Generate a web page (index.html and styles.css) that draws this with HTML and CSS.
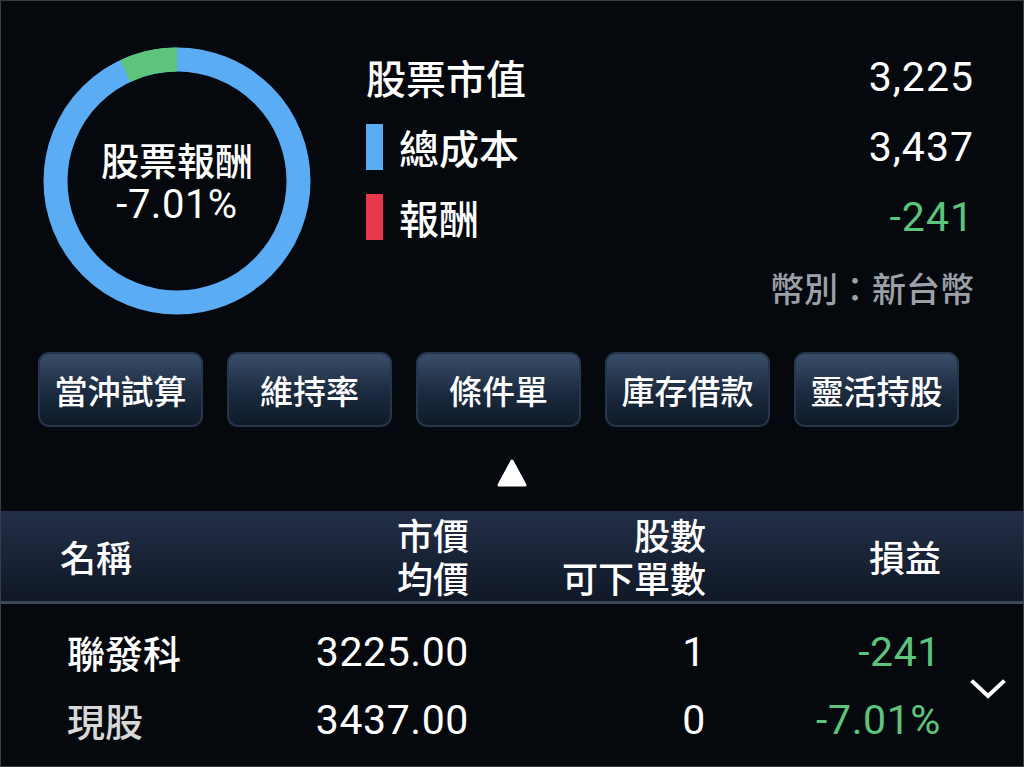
FILE: index.html
```html
<!DOCTYPE html>
<html lang="zh-Hant">
<head>
<meta charset="utf-8">
<title>股票報酬</title>
<link rel="stylesheet" href="styles.css">
</head>
<body>
<div class="screen">
  <section class="summary">
    <div class="donut">
      <svg class="ring" width="268" height="268" viewBox="0 0 268 268">
        <circle cx="134" cy="134" r="121.5" fill="none" stroke="#5aacf4" stroke-width="24"/>
        <circle cx="134" cy="134" r="121.5" fill="none" stroke="#5cc47b" stroke-width="24"
          stroke-dasharray="53.5 710" transform="rotate(-90 134 134) scale(1 -1) translate(0 -268)"/>
      </svg>
      <div class="donut-label">
        <div class="donut-title">股票報酬</div>
        <div class="donut-value">-7.01%</div>
      </div>
    </div>
    <div class="info">
      <div class="info-row">
        <span class="info-label">股票市值</span>
        <span class="info-num">3,225</span>
      </div>
      <div class="info-row">
        <span class="info-label"><i class="swatch swatch-blue"></i>總成本</span>
        <span class="info-num">3,437</span>
      </div>
      <div class="info-row">
        <span class="info-label"><i class="swatch swatch-red"></i>報酬</span>
        <span class="info-num green">-241</span>
      </div>
      <div class="info-row currency">幣別：新台幣</div>
    </div>
  </section>

  <nav class="actions">
    <button class="btn">當沖試算</button>
    <button class="btn">維持率</button>
    <button class="btn">條件單</button>
    <button class="btn">庫存借款</button>
    <button class="btn">靈活持股</button>
  </nav>

  <div class="toggle">
    <svg width="30" height="28" viewBox="0 0 30 28">
      <path d="M15 2 L28 26 L2 26 Z" fill="#ffffff" stroke="#ffffff" stroke-width="3" stroke-linejoin="round"/>
    </svg>
  </div>

  <div class="table-head">
    <div class="col col-name">名稱</div>
    <div class="col col-num"><span>市價</span><span>均價</span></div>
    <div class="col col-num"><span>股數</span><span>可下單數</span></div>
    <div class="col col-num">損益</div>
  </div>

  <div class="table-row">
    <div class="col col-name">
      <span>聯發科</span>
      <span class="sub">現股</span>
    </div>
    <div class="col col-num num"><span>3225.00</span><span>3437.00</span></div>
    <div class="col col-num num"><span>1</span><span>0</span></div>
    <div class="col col-num num green"><span>-241</span><span>-7.01%</span></div>
    <div class="col col-chev">
      <svg width="36" height="20" viewBox="0 0 36 20">
        <polyline points="3,3 18,17 33,3" fill="none" stroke="#ffffff" stroke-width="4" stroke-linecap="square"/>
      </svg>
    </div>
  </div>
</div>
</body>
</html>
```

FILE: styles.css
```css
* { box-sizing: border-box; }
html, body { margin: 0; padding: 0; }
body {
  background: #05080d;
  font-family: "Noto Sans CJK TC", "Noto Sans CJK SC", sans-serif;
  font-weight: 500;
  color: #ffffff;
}
.screen {
  width: 1024px;
  height: 767px;
  border: 1px solid #3a3d44;
  background: #05080d;
  overflow: hidden;
  display: flex;
  flex-direction: column;
}

/* summary */
.summary {
  display: flex;
  height: 351px;
}
.donut {
  position: relative;
  width: 268px;
  height: 268px;
  margin: 46px 0 0 42px;
}
.ring { display: block; }
.donut-label {
  position: absolute;
  inset: 0;
  display: flex;
  flex-direction: column;
  align-items: center;
  justify-content: center;
  padding-top: 2px;
}
.donut-title { font-size: 38px; line-height: 46px; }
.donut-value {
  font-family: "Roboto", "Noto Sans CJK TC", sans-serif;
  font-weight: 400;
  font-size: 40px;
  line-height: 46px;
  letter-spacing: 0.5px;
}
.info {
  margin-left: 55px;
  width: 608px;
  padding-top: 41px;
}
.info-row {
  height: 70px;
  display: flex;
  align-items: center;
  justify-content: space-between;
}
.info-label {
  display: flex;
  align-items: center;
  font-size: 40px;
}
.swatch {
  display: inline-block;
  width: 17px;
  height: 46px;
  margin-right: 16px;
}
.swatch-blue { background: #5aacf4; }
.swatch-red { background: #e8374a; }
.info-num {
  font-family: "Roboto", "Noto Sans CJK TC", sans-serif;
  font-weight: 400;
  font-size: 41px;
  letter-spacing: 1px;
}
.green { color: #5cc47b; }
.currency {
  justify-content: flex-end;
  color: #9ca0a8;
  font-size: 34px;
}

/* action buttons */
.actions {
  display: flex;
  gap: 24px;
  padding-left: 37px;
  height: 75px;
}
.btn {
  width: 165px;
  height: 75px;
  border-radius: 11px;
  border: 2px solid #25364b;
  background: linear-gradient(#3a4e69, #1b2a3e 55%, #0f1a29);
  color: #ffffff;
  font-family: "Noto Sans CJK TC", sans-serif;
  font-weight: 500;
  font-size: 33px;
  padding: 0;
}

.toggle {
  height: 84px;
  display: flex;
  justify-content: center;
  align-items: flex-start;
  padding-top: 32px;
}
.toggle svg { display: block; }

/* table */
.table-head, .table-row {
  display: grid;
  grid-template-columns: 250px 218px 237px 235px 1fr;
}
.table-head {
  height: 93px;
  background: linear-gradient(#232f48, #101826);
  border-bottom: 3px solid #3b4858;
  align-items: center;
  font-size: 36px;
}
.col { display: flex; flex-direction: column; }
.col-name { padding-left: 59px; }
.col-num { align-items: flex-end; }
.table-head .col { line-height: 43px; }
.table-row {
  padding-top: 14px;
  font-size: 38px;
  line-height: 68px;
}
.table-row .col-name { padding-left: 66px; }
.table-row .sub { color: #d8d8d8; }
.num {
  font-family: "Roboto", "Noto Sans CJK TC", sans-serif;
  font-weight: 400;
  font-size: 41px;
  letter-spacing: 0.6px;
}
.col-chev {
  align-items: flex-start;
  justify-content: center;
  padding-left: 29px;
  padding-top: 6px;
}
.col-chev svg { display: block; }
```
